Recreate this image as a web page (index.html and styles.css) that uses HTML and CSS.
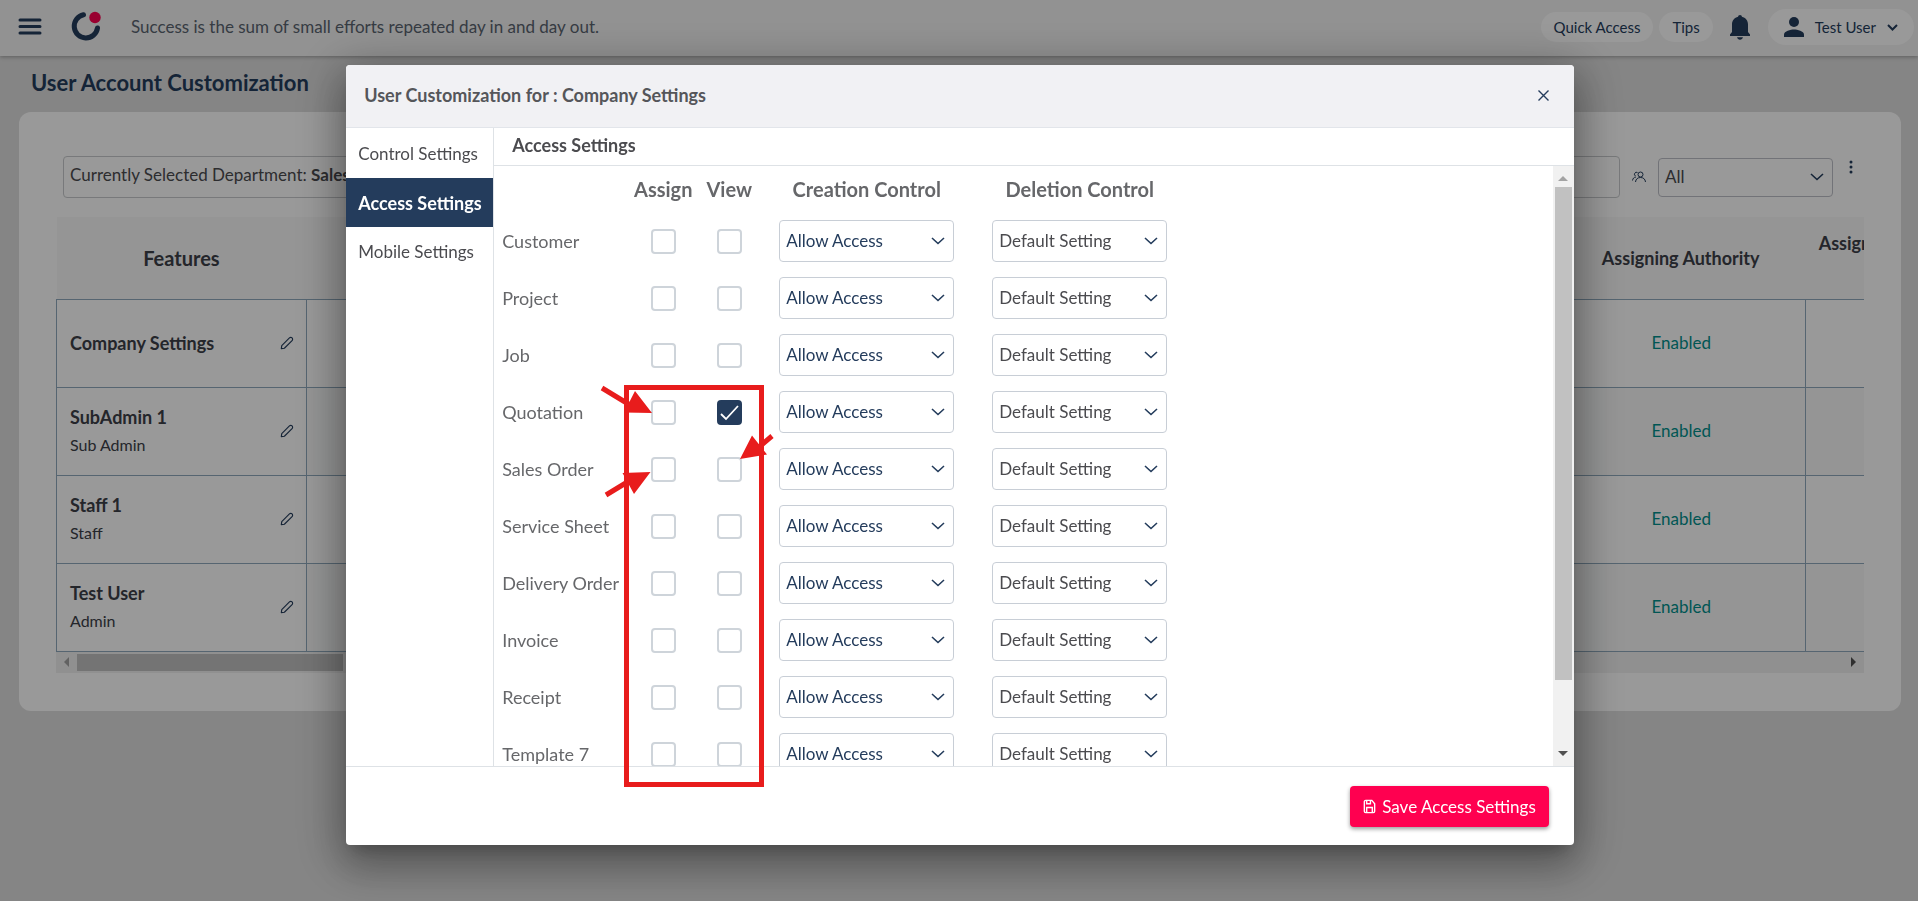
FILE: index.html
```html
<!DOCTYPE html>
<html lang="en">
<head>
<meta charset="utf-8">
<title>User Account Customization</title>
<link rel="stylesheet" href="styles.css">
</head>
<body>
<svg class="defs" aria-hidden="true">
  <symbol id="pencil" viewBox="0 0 16 16"><path d="M1.500 14.500 2 11 10.800 2.200a2 2 0 0 1 3 3L5 14 1.500 14.500Z" fill="none" stroke="currentColor" stroke-width="1.300" stroke-linejoin="round"/></symbol>
</svg>

<header class="topbar">
  <button class="icon-btn menu" aria-label="Menu"><svg width="24" height="18" viewBox="0 0 24 18"><path d="M2 2h20M2 8.500h20M2 15h20" stroke="currentColor" stroke-width="3" stroke-linecap="round"/></svg></button>
  <svg class="logo" width="32" height="32" viewBox="0 0 32 32"><path d="M13.500 3.800A11.700 11.700 0 1 0 27.500 17" fill="none" stroke="#243c5c" stroke-width="5" stroke-linecap="round"/><circle cx="25" cy="6.500" r="5.700" fill="#ff0050"/></svg>
  <p class="quote">Success is the sum of small efforts repeated day in and day out.</p>
  <button class="pill">Quick Access</button>
  <button class="pill">Tips</button>
  <button class="icon-btn bell" aria-label="Notifications"><svg width="20" height="25" viewBox="0 0 20 25"><path d="M10 0c1.100 0 1.900.8 1.900 1.800C15.600 2.600 18 5.600 18 9.500V17l2 2.500V21H0v-1.500L2 17V9.500C2 5.600 4.400 2.600 8.100 1.800 8.100.8 8.900 0 10 0ZM7 22.300h6c-.4 1.500-1.500 2.500-3 2.500s-2.600-1-3-2.500Z" fill="currentColor"/></svg></button>
  <button class="pill user"><svg width="20" height="20" viewBox="0 0 20 20"><circle cx="10" cy="5" r="5" fill="currentColor"/><path d="M0 20v-2.500C0 14.200 6.700 12.500 10 12.500s10 1.700 10 5V20Z" fill="currentColor"/></svg><span>Test User</span><svg width="11" height="7" viewBox="0 0 11 7"><path d="m1 1 4.500 4.500L10 1" fill="none" stroke="currentColor" stroke-width="2"/></svg></button>
</header>

<main class="page">
  <h1>User Account Customization</h1>
  <section class="card">
    <div class="filters">
      <div class="dept">Currently Selected Department: <b>Sales</b></div>
      <svg class="people" width="14" height="12" viewBox="0 0 14 12" fill="none" stroke="currentColor"><circle cx="8.500" cy="3.500" r="2.500"/><path d="M3.500 11c.3-3 2.200-4.500 5-4.500s4.700 1.500 5 4.500M5.500 1.500a2 2 0 0 0-2 3.500M.5 9.500C.8 7.500 2 6 4 6"/></svg>
      <select class="all" aria-label="User filter"><option>All</option></select>
      <button class="icon-btn kebab" aria-label="More"><svg width="4" height="14" viewBox="0 0 4 14" fill="currentColor"><circle cx="2" cy="2" r="1.500"/><circle cx="2" cy="7" r="1.500"/><circle cx="2" cy="12" r="1.500"/></svg></button>
    </div>
    <div class="table-wrap">
      <table class="users">
        <thead><tr><th class="first">Features</th><th></th><th></th><th></th><th></th><th></th><th>Assigning Authority</th><th class="cut">Assigning<br>&nbsp;</th></tr></thead>
        <tbody>
          <tr><td class="name"><div><p><b>Company Settings</b></p><button class="icon-btn" aria-label="Edit"><svg width="14" height="14"><use href="#pencil"/></svg></button></div></td><td></td><td></td><td></td><td></td><td></td><td>Enabled</td><td></td></tr>
          <tr><td class="name"><div><p><b>SubAdmin 1</b>Sub Admin</p><button class="icon-btn" aria-label="Edit"><svg width="14" height="14"><use href="#pencil"/></svg></button></div></td><td></td><td></td><td></td><td></td><td></td><td>Enabled</td><td></td></tr>
          <tr><td class="name"><div><p><b>Staff 1</b>Staff</p><button class="icon-btn" aria-label="Edit"><svg width="14" height="14"><use href="#pencil"/></svg></button></div></td><td></td><td></td><td></td><td></td><td></td><td>Enabled</td><td></td></tr>
          <tr><td class="name"><div><p><b>Test User</b>Admin</p><button class="icon-btn" aria-label="Edit"><svg width="14" height="14"><use href="#pencil"/></svg></button></div></td><td></td><td></td><td></td><td></td><td></td><td>Enabled</td><td></td></tr>
        </tbody>
      </table>
    </div>
    <div class="hbar"><i class="arrow left"></i><i class="thumb"></i><i class="arrow right"></i></div>
  </section>
</main>

<div class="overlay">
  <div class="modal" role="dialog" aria-labelledby="dlg">
    <div class="modal-head">
      <h2 id="dlg">User Customization for : Company Settings</h2>
      <button class="icon-btn close" aria-label="Close"><svg width="11" height="11" viewBox="0 0 11 11"><path d="m.5.5 10 10m0-10-10 10" stroke="currentColor" stroke-width="1.400"/></svg></button>
    </div>
    <div class="modal-body">
      <nav class="tabs">
        <button>Control Settings</button>
        <button class="active">Access Settings</button>
        <button>Mobile Settings</button>
      </nav>
      <section class="panel">
        <h3>Access Settings</h3>
        <div class="scroll">
          <div class="view">
            <table class="access">
              <thead><tr><th class="c-name"></th><th class="c-check">Assign</th><th class="c-check">View</th><th class="c-create">Creation Control</th><th class="c-delete">Deletion Control</th></tr></thead>
              <tbody id="rows"></tbody>
            </table>
          </div>
          <div class="vbar"><i class="arrow up"></i><i class="thumb"></i><i class="arrow down"></i></div>
        </div>
      </section>
    </div>
    <div class="modal-foot">
      <button class="save"><svg width="13" height="15" viewBox="0 0 13 16" fill="none" stroke="currentColor" stroke-width="1.500"><path d="M1 3a1.500 1.500 0 0 1 1.500-1.500H9L12 5v8a1.500 1.500 0 0 1-1.500 1.500h-8A1.500 1.500 0 0 1 1 13ZM3.500 14V9h6v5M3.500 2v3h4V2"/></svg>Save Access Settings</button>
    </div>
    <svg class="marks" width="440" height="740" viewBox="0 0 440 740" fill="#e81c1c" stroke="#e81c1c" aria-hidden="true">
      <path d="M280.500 322.500h135v397h-135Z" fill="none" stroke-width="5"/>
      <path d="m256 323 28 17M426 371l-20 17M260 430l28-17" stroke-width="5"/>
      <path d="m306 348-17-22-11 21.500ZM394 394l12-23.500 15 19ZM304.500 407l-28 1 11.500 21Z" stroke="none"/>
    </svg>
  </div>
</div>
<script src="rows.js"></script>
</body>
</html>
```
FILE: styles.css
```css
* { box-sizing: border-box; }
body {
  margin: 0;
  min-height: 100vh;
  background: #dedede;
  color: #4b4b4f;
  font: 17px/24px Lato, "Noto Sans", sans-serif;
  overflow: hidden;
}
h1, h2, h3, p { margin: 0; }
button, select, input { font: inherit; color: inherit; }
button { cursor: pointer; }
.defs { position: absolute; width: 0; height: 0; }
.icon-btn { display: flex; padding: 0; border: 0; background: none; color: #243c5c; }

.topbar {
  display: flex;
  align-items: center;
  height: 56px;
  padding: 0 4px 2px 18px;
  background: #f3f3f3;
  box-shadow: 0 1px 4px rgba(0, 0, 0, .3);
}
.logo { margin-left: 28px; }
.quote { flex: 1; margin-left: 29px; color: #5a6470; }
.pill {
  height: 30px;
  margin-right: 6px;
  padding: 0 13px;
  border: 0;
  border-radius: 18px;
  background: #fff;
  color: #243c5c;
  font-size: 15px;
}
.bell { margin: 0 18px 0 11px; }
.user {
  display: flex;
  align-items: center;
  gap: 11px;
  height: 36px;
  margin: 0;
  padding: 0 16px;
}

.page { padding: 12px 17px 0 19px; }
h1 { padding-left: 12px; color: #243c5c; font-size: 22px; line-height: 30px; }
.card {
  margin-top: 14px;
  padding: 44px 37px 38px;
  border-radius: 12px;
  background: #fff;
}
.filters { display: flex; align-items: center; padding: 0 11px 0 7px; }
.dept {
  flex: 1;
  height: 42px;
  padding: 6px;
  border: 1px solid #c8cacd;
  border-radius: 4px;
}
.people { margin: 0 12px; color: #243c5c; }
.all, .access select {
  width: 175px;
  height: 42px;
  padding: 0 6px;
  border: 1px solid #c8ced6;
  border-radius: 4px;
  appearance: none;
  background: url("data:image/svg+xml,%3Csvg xmlns='http://www.w3.org/2000/svg' width='14' height='8'%3E%3Cpath d='m1 1 6 5.500 6-5.500' fill='none' stroke='%23243c5c' stroke-width='1.600'/%3E%3C/svg%3E") no-repeat right 8px center #fff;
}
.all { height: 39px; border-color: #bfc0c8; }
.kebab { margin: 0 0 20px 16px; }

.table-wrap { margin-top: 19px; overflow: hidden; }
.users { width: 2000px; border-collapse: collapse; table-layout: fixed; }
.users th {
  height: 82px;
  padding: 0 13px;
  background: #f8f8f8;
  color: #3c4048;
  font-size: 18px;
  font-weight: 700;
  line-height: 30px;
}
.users .first { font-size: 20px; }
.users .cut { text-align: left; }
.users td {
  height: 88px;
  padding: 0 12px 0 13px;
  border: 1px solid #8fa9bd;
  color: #00908c;
  text-align: center;
}
.users tr:nth-child(even) td:not(.name) { background: #f8f9f9; }
.users .name { color: #3c4048; font-size: 16px; text-align: left; }
.name div { display: flex; justify-content: space-between; align-items: center; }
.name p { line-height: 27px; }
.name b { display: block; font-size: 18px; }

.hbar, .vbar { display: flex; align-items: center; background: #f1f1f1; }
.hbar { height: 21px; padding: 0 8px; }
.thumb { background: #c1c1c1; }
.hbar .thumb { width: 266px; height: 17px; margin: 0 auto 0 8px; }
.arrow { width: 0; height: 0; border: 5px solid transparent; }
.left { border-right-color: #a3a3a3; border-left: 0; }
.right { border-left-color: #505050; border-right: 0; }
.up { border-bottom-color: #a3a3a3; border-top: 0; }
.down { border-top-color: #505050; border-bottom: 0; }

.overlay {
  position: fixed;
  inset: 0;
  display: flex;
  padding: 65px calc(18% - 1px) 56px calc(18% + 1px);
  background: rgba(0, 0, 0, .4);
}
.modal {
  position: relative;
  display: flex;
  flex: 1;
  flex-direction: column;
  min-width: 0;
  border-radius: 4px;
  background: #fff;
  box-shadow: 0 11px 15px -7px rgba(0, 0, 0, .2), 0 24px 38px 3px rgba(0, 0, 0, .14), 0 9px 46px 8px rgba(0, 0, 0, .3);
}
.modal-head {
  display: flex;
  align-items: center;
  justify-content: space-between;
  height: 63px;
  padding: 0 25px 2px 18px;
  border-bottom: 1px solid #e2e5ea;
  border-radius: 4px 4px 0 0;
  background: #f1f1f4;
}
h2, h3 { font-size: 18px; line-height: 24px; }
h2 { color: #55565a; }
.modal-body { display: flex; flex: 1; min-height: 0; }
.tabs { width: 148px; padding-top: 1px; border-right: 1px solid #dee2e6; }
.tabs button {
  width: 100%;
  height: 49px;
  padding: 0 12px;
  border: 0;
  background: none;
  text-align: left;
  white-space: nowrap;
}
.tabs .active { background: #243c5c; color: #fff; font-size: 18px; font-weight: 700; }
.panel { display: flex; flex: 1; flex-direction: column; min-width: 0; }
h3 { padding: 5px 18px 8px; border-bottom: 1px solid #dee2e6; }
.scroll { display: flex; flex: 1; min-height: 0; }
.view { flex: 1; overflow: hidden; }
.vbar { flex-direction: column; width: 21px; padding: 10px 0; }
.vbar .thumb { width: 17px; height: 85%; margin: 6px 0 auto; }
.access { border-collapse: collapse; table-layout: fixed; width: 694px; color: #66676a; }
.access th { height: 46px; padding: 0; font-size: 20px; }
.c-name { width: 136px; }
.c-check { width: 66px; }
.c-create { width: 209px; }
.c-delete { width: 217px; }
.access td { height: 57px; padding: 0; text-align: center; }
.access td:first-child { padding-left: 8px; font-size: 18px; text-align: left; white-space: nowrap; }
.access input {
  width: 25px;
  height: 25px;
  margin: 0;
  border: 2px solid #ced4da;
  border-radius: 4px;
  appearance: none;
  vertical-align: middle;
}
.access input:checked {
  border-color: #243c5c;
  background: url("data:image/svg+xml,%3Csvg xmlns='http://www.w3.org/2000/svg' width='21' height='21'%3E%3Cpath d='m2 12 5 5L19 4' fill='none' stroke='white' stroke-width='1.800'/%3E%3C/svg%3E") center #243c5c;
}
.access .allow { color: #243c5c; }
.access .default { color: #4b4b4f; }

.modal-foot {
  display: flex;
  justify-content: flex-end;
  height: 79px;
  padding: 19px 25px;
  border-top: 1px solid #dee2e6;
}
.save {
  display: flex;
  align-items: center;
  gap: 6px;
  height: 41px;
  padding: 0 13px;
  border: 0;
  border-radius: 4px;
  background: #ff0050;
  box-shadow: 0 2px 4px rgba(0, 0, 0, .4);
  color: #fff;
}
.marks { position: absolute; top: 0; left: 0; pointer-events: none; }
```
FILE: rows.js
```js
const features = ["Customer", "Project", "Job", "Quotation", "Sales Order", "Service Sheet", "Delivery Order", "Invoice", "Receipt", "Template 7"];
document.getElementById("rows").innerHTML = features.map((name) => `
  <tr>
    <td>${name}</td>
    <td><input type="checkbox" aria-label="${name} assign"></td>
    <td><input type="checkbox" aria-label="${name} view"${name === "Quotation" ? " checked" : ""}></td>
    <td><select class="allow" aria-label="${name} creation control"><option>Allow Access</option></select></td>
    <td><select class="default" aria-label="${name} deletion control"><option>Default Setting</option></select></td>
  </tr>`).join("");
```
